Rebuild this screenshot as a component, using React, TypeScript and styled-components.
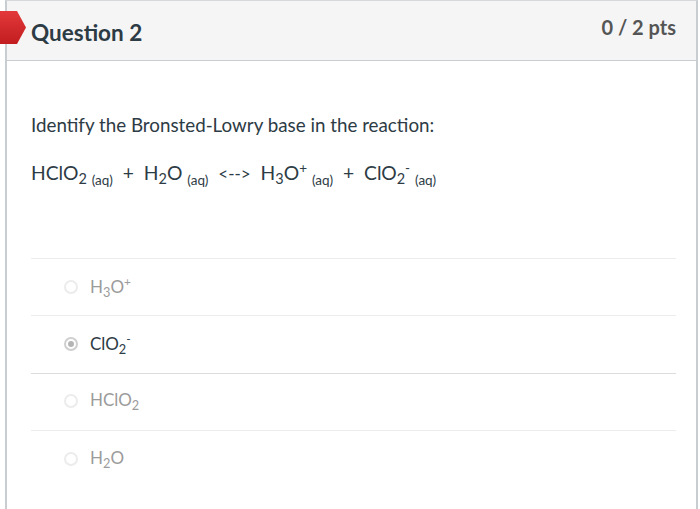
import { FC } from "react";
import styled, { createGlobalStyle } from "styled-components";

const GlobalStyle = createGlobalStyle`
  html, body {
    margin: 0;
    padding: 0;
    background: #ffffff;
    font-family: Lato, "Liberation Sans", sans-serif;
  }
`;

const Page = styled.div`
  width: 700px;
  height: 509px;
  background: #fff;
  overflow: hidden;
`;

const Card = styled.div`
  margin-left: 5px;
  width: 693px;
  height: 509px;
  border-left: 2px solid #c7cdd1;
  border-right: 2px solid #c7cdd1;
  border-top: 1px solid #d6d9dc;
  box-sizing: border-box;
`;

const Header = styled.div`
  position: relative;
  height: 60px;
  box-sizing: border-box;
  background: #f5f5f5;
  border-bottom: 1px solid #c7cdd1;
  display: flex;
  align-items: center;
  justify-content: space-between;
  padding: 0 20px 0 24px;
`;

const Badge = styled.svg`
  position: absolute;
  left: -7px;
  top: 10px;
`;

const Title = styled.h2`
  margin: 0;
  font-size: 22.5px;
  font-weight: 700;
  color: #2d3b45;
  padding-top: 3px;
`;

const Points = styled.div`
  font-size: 20px;
  font-weight: 700;
  color: #555;
  padding-bottom: 8px;
`;

const Body = styled.div`
  padding: 51px 20px 0 24px;
  color: #2d3b45;
`;

const Prompt = styled.p`
  margin: 0;
  font-size: 18.8px;
  line-height: 26px;
`;

const Equation = styled.p`
  margin: 17px 0 0;
  font-size: 19.3px;
  line-height: 26px;
  white-space: pre;
`;

const Arrow = styled.span`
  font-size: 17px;
`;

const Aq = styled.sub`
  font-size: 13.5px;
  vertical-align: -5px;
`;

const Sub = styled.sub`
  font-size: 0.75em;
  vertical-align: -4px;
`;

const Sup = styled.sup`
  font-size: 0.7em;
  vertical-align: 7px;
`;

const Answers = styled.ul`
  list-style: none;
  margin: 65px 0 0;
  padding: 0;
  border-top: 1px solid #ececec;
`;

const Answer = styled.li<{ $selected?: boolean }>`
  height: 57.4px;
  box-sizing: border-box;
  border-bottom: 1px solid ${(p) => (p.$selected ? "#dcdcdc" : "#ececec")};
  display: flex;
  align-items: center;
  padding-left: 33px;
  padding-bottom: 1px;
  gap: 12px;
  font-size: 17px;
  color: ${(p) => (p.$selected ? "#2d3b45" : "#9b9b9b")};
  &:last-child {
    border-bottom: none;
  }
`;

const Radio = styled.span<{ $selected?: boolean }>`
  width: 14px;
  height: 14px;
  border-radius: 50%;
  box-sizing: border-box;
  border: 2px solid ${(p) => (p.$selected ? "#cfcfcf" : "#ececec")};
  background: #fff;
  display: flex;
  align-items: center;
  justify-content: center;
  &::after {
    content: "";
    width: 6px;
    height: 6px;
    border-radius: 50%;
    background: ${(p) => (p.$selected ? "#b5b5b5" : "transparent")};
  }
`;

const Label = styled.span``;

const App: FC = () => {
  return (
    <Page>
      <GlobalStyle />
      <Card>
        <Header>
          <Badge width="26" height="33" viewBox="0 0 26 33">
            <defs>
              <linearGradient id="bg" x1="0" y1="0" x2="0" y2="1">
                <stop offset="0" stopColor="#e3393a" />
                <stop offset="1" stopColor="#c21d20" />
              </linearGradient>
            </defs>
            <path d="M0 0 H17 L26 16.5 L17 33 H0 Z" fill="url(#bg)" />
          </Badge>
          <Title>Question 2</Title>
          <Points>0 / 2 pts</Points>
        </Header>
        <Body>
          <Prompt>Identify the Bronsted-Lowry base in the reaction:</Prompt>
          <Equation>
            HClO<Sub>2</Sub> <Aq>(aq)</Aq>{"  +  "}H<Sub>2</Sub>O <Aq>(aq)</Aq>
            {"  "}
            <Arrow>&lt;--&gt;</Arrow>
            {"  "}H<Sub>3</Sub>O<Sup>+</Sup> <Aq>(aq)</Aq>{"  +  "}ClO
            <Sub>2</Sub>
            <Sup>-</Sup> <Aq>(aq)</Aq>
          </Equation>
          <Answers>
            <Answer>
              <Radio />
              <Label>
                H<Sub>3</Sub>O<Sup>+</Sup>
              </Label>
            </Answer>
            <Answer $selected>
              <Radio $selected />
              <Label>
                ClO<Sub>2</Sub>
                <Sup>-</Sup>
              </Label>
            </Answer>
            <Answer>
              <Radio />
              <Label>
                HClO<Sub>2</Sub>
              </Label>
            </Answer>
            <Answer>
              <Radio />
              <Label>
                H<Sub>2</Sub>O
              </Label>
            </Answer>
          </Answers>
        </Body>
      </Card>
    </Page>
  );
};

export default App;
